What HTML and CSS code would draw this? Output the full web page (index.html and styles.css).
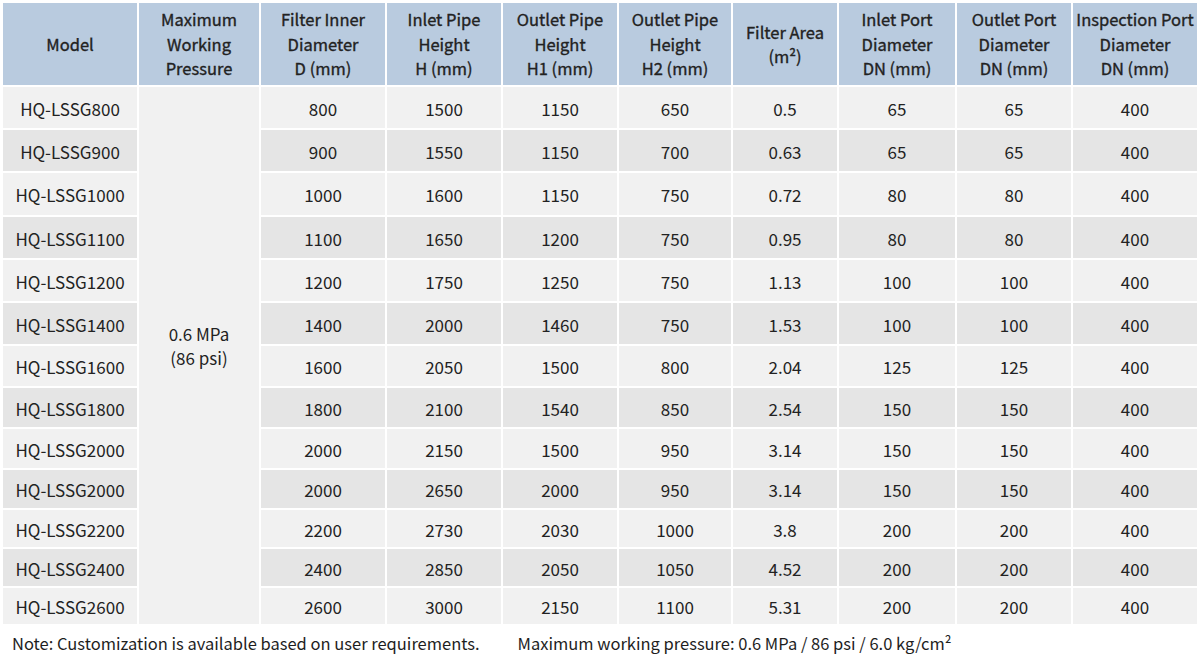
FILE: index.html
```html
<!DOCTYPE html>
<html lang="en">
<head>
<meta charset="utf-8">
<title>Filter specifications</title>
<link rel="stylesheet" href="styles.css">
</head>
<body>
<table class="spec">
  <colgroup>
    <col class="c-model"><col class="c-press"><col class="c-d"><col class="c-h"><col class="c-h1"><col class="c-h2"><col class="c-area"><col class="c-in"><col class="c-out"><col class="c-insp">
  </colgroup>
  <thead>
    <tr>
      <th>Model</th>
      <th>Maximum<br>Working<br>Pressure</th>
      <th>Filter Inner<br>Diameter<br>D (mm)</th>
      <th>Inlet Pipe<br>Height<br>H (mm)</th>
      <th>Outlet Pipe<br>Height<br>H1 (mm)</th>
      <th>Outlet Pipe<br>Height<br>H2 (mm)</th>
      <th>Filter Area<br>(m²)</th>
      <th>Inlet Port<br>Diameter<br>DN (mm)</th>
      <th>Outlet Port<br>Diameter<br>DN (mm)</th>
      <th>Inspection Port<br>Diameter<br>DN (mm)</th>
    </tr>
  </thead>
  <tbody>
    <tr><td>HQ-LSSG800</td><td class="press" rowspan="13">0.6 MPa<br>(86 psi)</td><td>800</td><td>1500</td><td>1150</td><td>650</td><td>0.5</td><td>65</td><td>65</td><td>400</td></tr>
    <tr><td>HQ-LSSG900</td><td>900</td><td>1550</td><td>1150</td><td>700</td><td>0.63</td><td>65</td><td>65</td><td>400</td></tr>
    <tr><td>HQ-LSSG1000</td><td>1000</td><td>1600</td><td>1150</td><td>750</td><td>0.72</td><td>80</td><td>80</td><td>400</td></tr>
    <tr><td>HQ-LSSG1100</td><td>1100</td><td>1650</td><td>1200</td><td>750</td><td>0.95</td><td>80</td><td>80</td><td>400</td></tr>
    <tr><td>HQ-LSSG1200</td><td>1200</td><td>1750</td><td>1250</td><td>750</td><td>1.13</td><td>100</td><td>100</td><td>400</td></tr>
    <tr><td>HQ-LSSG1400</td><td>1400</td><td>2000</td><td>1460</td><td>750</td><td>1.53</td><td>100</td><td>100</td><td>400</td></tr>
    <tr><td>HQ-LSSG1600</td><td>1600</td><td>2050</td><td>1500</td><td>800</td><td>2.04</td><td>125</td><td>125</td><td>400</td></tr>
    <tr><td>HQ-LSSG1800</td><td>1800</td><td>2100</td><td>1540</td><td>850</td><td>2.54</td><td>150</td><td>150</td><td>400</td></tr>
    <tr><td>HQ-LSSG2000</td><td>2000</td><td>2150</td><td>1500</td><td>950</td><td>3.14</td><td>150</td><td>150</td><td>400</td></tr>
    <tr><td>HQ-LSSG2000</td><td>2000</td><td>2650</td><td>2000</td><td>950</td><td>3.14</td><td>150</td><td>150</td><td>400</td></tr>
    <tr><td>HQ-LSSG2200</td><td>2200</td><td>2730</td><td>2030</td><td>1000</td><td>3.8</td><td>200</td><td>200</td><td>400</td></tr>
    <tr><td>HQ-LSSG2400</td><td>2400</td><td>2850</td><td>2050</td><td>1050</td><td>4.52</td><td>200</td><td>200</td><td>400</td></tr>
    <tr><td>HQ-LSSG2600</td><td>2600</td><td>3000</td><td>2150</td><td>1100</td><td>5.31</td><td>200</td><td>200</td><td>400</td></tr>
  </tbody>
</table>
<div class="notes">
  <p class="note">Note: Customization is available based on user requirements.</p>
  <p class="note">Maximum working pressure: 0.6 MPa / 86 psi / 6.0 kg/cm²</p>
</div>
</body>
</html>
```

FILE: styles.css
```css
html, body {
  margin: 0;
  padding: 0;
  background: #ffffff;
}

body {
  font-family: "Noto Sans CJK SC", "Noto Sans", sans-serif;
  font-size: 17px;
  color: #222222;
  width: 1200px;
  height: 657px;
  overflow: hidden;
}

.spec {
  border-collapse: separate;
  border-spacing: 2px;
  table-layout: fixed;
  width: 1198px;
  margin: 1px 0 0 1px;
}

.c-model { width: 134px; }
.c-press { width: 120px; }
.c-d { width: 124px; }
.c-h { width: 114px; }
.c-h1 { width: 114px; }
.c-h2 { width: 112px; }
.c-area { width: 104px; }
.c-in { width: 116px; }
.c-out { width: 114px; }
.c-insp { width: 124px; }

.spec th {
  background: #b9cbdf;
  color: #222222;
  font-size: 16.5px;
  font-weight: 400;
  -webkit-text-stroke: 0.35px #222222;
  line-height: 24.5px;
  height: 82px;
  padding: 0;
  text-align: center;
  vertical-align: middle;
  white-space: nowrap;
}

.spec td {
  padding: 2px 0 0;
  text-align: center;
  vertical-align: middle;
  line-height: 22px;
  white-space: nowrap;
}

.spec tbody tr:nth-child(odd) td { background: #f1f1f1; }
.spec tbody tr:nth-child(even) td { background: #e5e5e5; }
.spec tbody td.press {
  background: #f1f1f1;
  line-height: 24px;
  padding: 0 0 20px;
}

.spec tbody tr:nth-child(1) td { height: 39px; }
.spec tbody tr:nth-child(2) td { height: 39px; }
.spec tbody tr:nth-child(3) td { height: 40px; }
.spec tbody tr:nth-child(4) td { height: 39px; }
.spec tbody tr:nth-child(5) td { height: 39px; }
.spec tbody tr:nth-child(6) td { height: 39px; }
.spec tbody tr:nth-child(7) td { height: 38px; }
.spec tbody tr:nth-child(8) td { height: 37px; }
.spec tbody tr:nth-child(9) td { height: 37px; }
.spec tbody tr:nth-child(10) td { height: 36px; }
.spec tbody tr:nth-child(11) td { height: 35px; }
.spec tbody tr:nth-child(12) td { height: 35px; }
.spec tbody tr:nth-child(13) td { height: 34px; }

.notes {
  display: flex;
  gap: 38px;
  padding: 6px 0 0 12px;
}

.note {
  margin: 0;
  font-size: 16.5px;
  line-height: 22px;
  color: #1e1e1e;
}
```
